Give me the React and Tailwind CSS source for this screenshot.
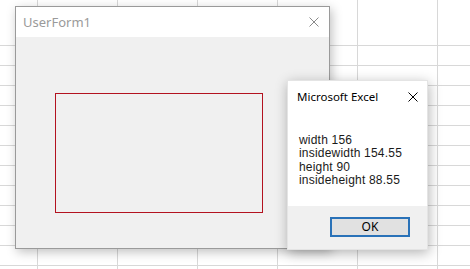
import React from "react";

const cols = [38, 80, 80, 80, 80, 80, 80];
const rows = [27, 20, 20, 20, 20, 20, 20, 20, 20, 20, 20, 20, 20, 20];

const Sheet = () => (
  <div
    className="grid"
    style={{
      gridTemplateColumns: cols.map((c) => `${c}px`).join(" "),
      gridTemplateRows: rows.map((r) => `${r}px`).join(" "),
    }}
  >
    {rows.map((_, r) =>
      cols.map((_, c) => (
        <div
          key={`${r}-${c}`}
          className={`border-[#d8d8d8] ${r === 0 ? "" : "border-b"} ${c === cols.length - 1 ? "" : "border-r"}`}
        />
      ))
    )}
  </div>
);

const CloseX = ({ className }) => (
  <svg viewBox="0 0 10 10" className={className} fill="none">
    <path d="M0.5 0.5 L9.5 9.5 M9.5 0.5 L0.5 9.5" stroke="currentColor" strokeWidth="1" />
  </svg>
);

const App = () => {
  return (
    <div className="relative w-[470px] h-[269px] overflow-hidden bg-white font-['Noto_Sans',sans-serif]">
      <div className="absolute inset-0 -translate-y-[1px]">
        <Sheet />
      </div>

      {/* --- UserForm1 --- */}
      <div className="absolute left-[15px] top-[6px] w-[315px] h-[243px] flex flex-col border border-[#9a9a9a] shadow-[2px_3px_10px_rgba(0,0,0,0.25)]">
        <div className="h-[30px] bg-white flex items-center justify-between pl-[7px] pr-[10px]">
          <span className="text-[13px] text-[#9a9a9a] leading-none">UserForm1</span>
          <CloseX className="w-[10px] h-[10px] text-[#8a8a8a]" />
        </div>
        <div className="flex-1 bg-[#f0f0f0] pl-[39px] pt-[56px]">
          <div className="w-[208px] h-[120px] border border-[#b3121f]" />
        </div>
      </div>

      {/* --- Microsoft Excel msgbox --- */}
      <div className="absolute left-[287px] top-[80px] w-[141px] h-[170px] flex flex-col bg-white border border-[#e4e4e4] shadow-[1px_3px_12px_rgba(0,0,0,0.3)]">
        <div className="h-[30px] flex items-center justify-between pl-[9px] pr-[9px] pt-[1px]">
          <span className="text-[11.5px] text-black leading-none">Microsoft Excel</span>
          <CloseX className="w-[10px] h-[10px] text-black" />
        </div>
        <div className="flex-1 flex flex-col pl-[11px] pt-[23px] text-[12px] leading-[13.4px] tracking-[0.2px] text-[#1a1a1a] font-['Liberation_Sans',sans-serif]">
          <span>width 156</span>
          <span>insidewidth 154.55</span>
          <span>height 90</span>
          <span>insideheight 88.55</span>
        </div>
        <div className="h-[43px] bg-[#f0f0f0] flex items-start justify-end pt-[11px] pr-[17px]">
          <button className="w-[80px] h-[20px] border-2 border-[#2a72b8] bg-[#e1e1e1] text-[12px] leading-none text-black">
            OK
          </button>
        </div>
      </div>
    </div>
  );
};

export default App;
